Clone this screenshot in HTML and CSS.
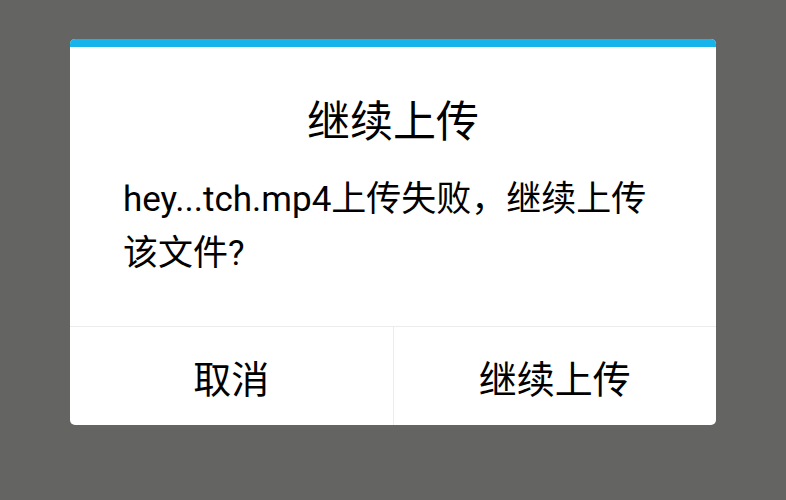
FILE: index.html
```html
<!DOCTYPE html>
<html lang="zh-CN">
<head>
<meta charset="utf-8">
<link rel="stylesheet" href="styles.css">
</head>
<body>
<div class="dialog">
  <div class="bar"></div>
  <div class="title">继续上传</div>
  <div class="message">hey...tch.mp4上传失败，继续上传<br>该文件?</div>
  <div class="actions">
    <div class="btn">取消</div>
    <div class="btn btn-right">继续上传</div>
  </div>
</div>
</body>
</html>
```
FILE: styles.css
```css
html, body {
  margin: 0;
  padding: 0;
  background: #646563;
  height: 100%;
}
body {
  padding-top: 39px;
  box-sizing: border-box;
  font-family: Roboto, "Noto Sans CJK SC", sans-serif;
  color: #000;
}
.dialog {
  margin-left: 70px;
  width: 646px;
  background: #fff;
  border-radius: 5px;
  overflow: hidden;
}
.bar {
  height: 8px;
  background: #17b4ec;
}
.title {
  padding-top: 50px;
  height: 50px;
  line-height: 50px;
  font-size: 43px;
  text-align: center;
}
.message {
  padding: 26px 50px 45px 53px;
  font-size: 35px;
  line-height: 54px;
}
.actions {
  display: flex;
  border-top: 1px solid #ececec;
  height: 98px;
}
.btn {
  flex: 1;
  display: flex;
  align-items: center;
  justify-content: center;
  font-size: 38px;
}
.btn-right {
  border-left: 1px solid #ececec;
}
```
